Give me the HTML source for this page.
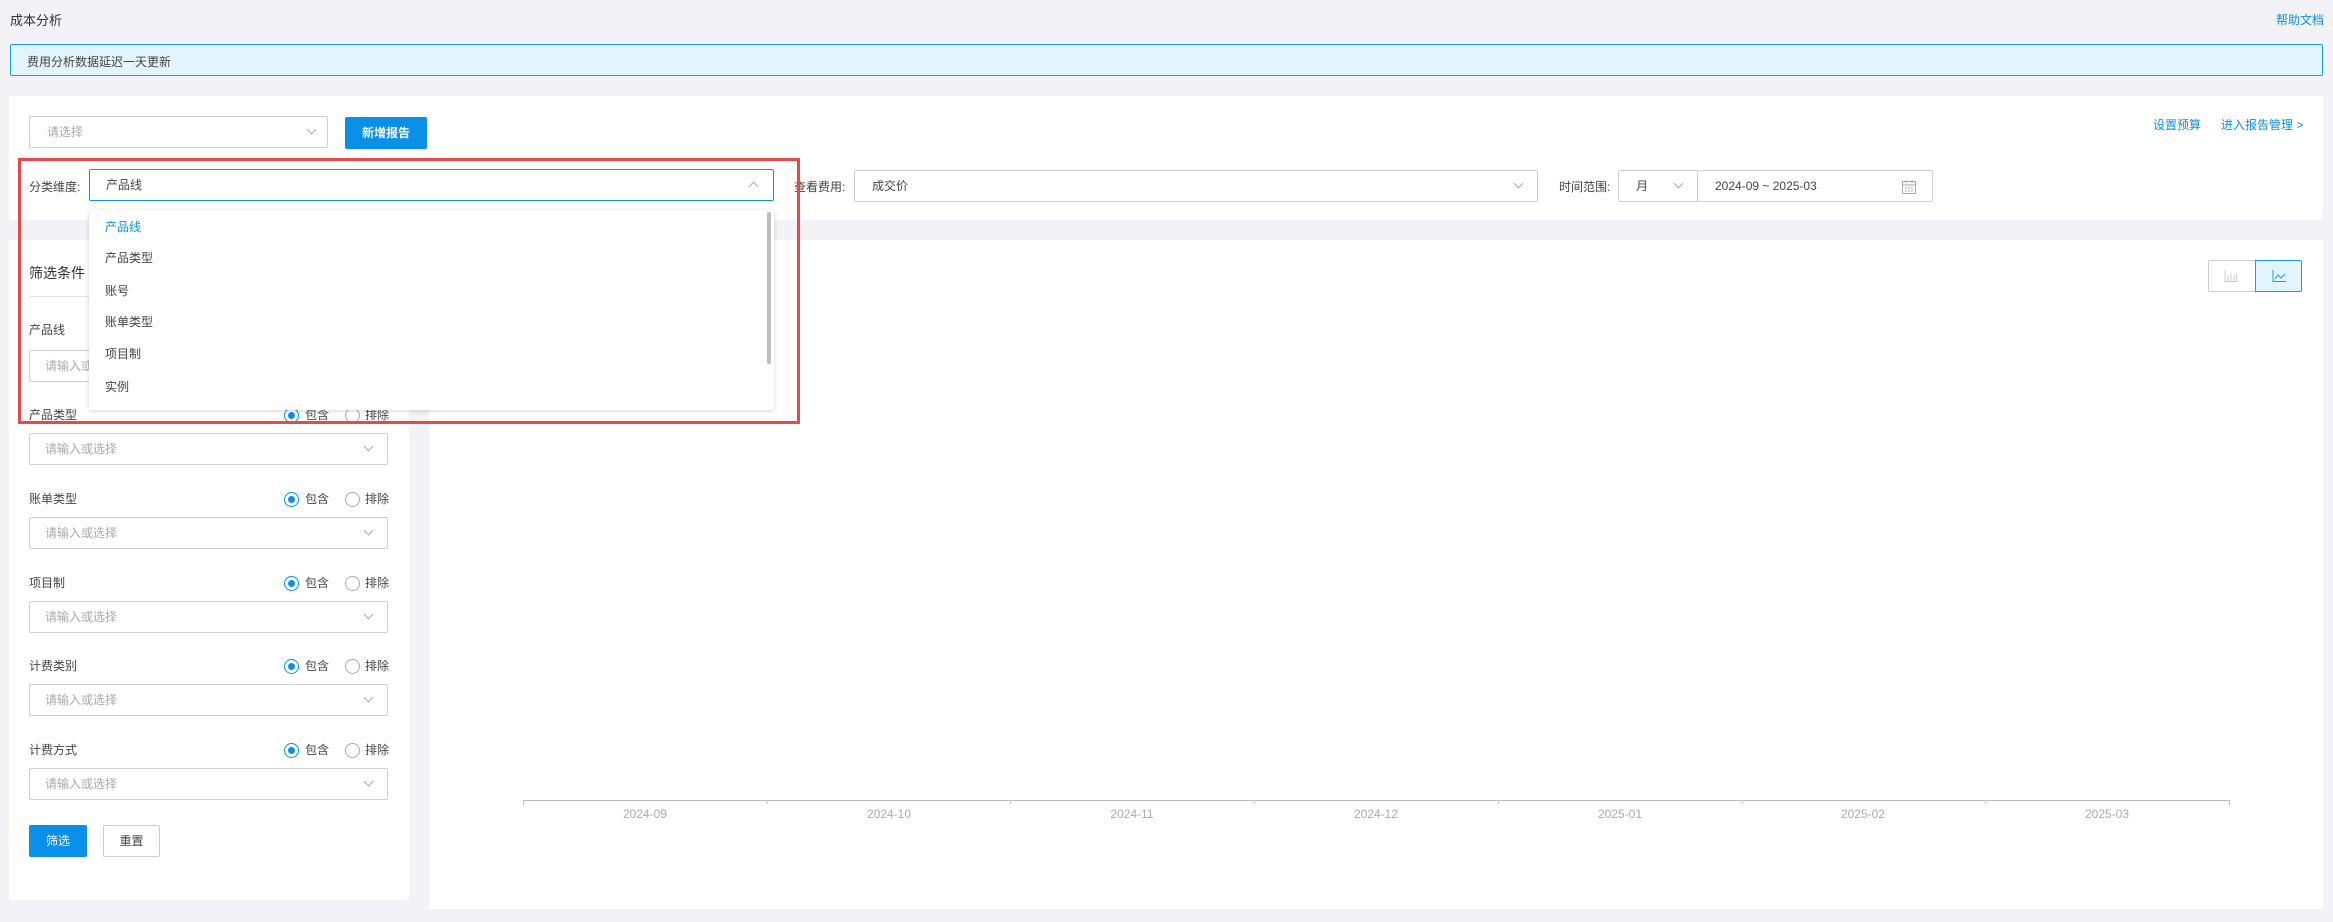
<!DOCTYPE html>
<html><head><meta charset="utf-8"><style>
*{box-sizing:border-box;margin:0;padding:0}
body{width:2333px;height:922px;background:#f3f3f7;font-family:"Liberation Sans","Noto Sans CJK SC",sans-serif;font-size:12px;color:#444;position:relative;overflow:hidden}
.a{position:absolute}
.inp{position:absolute;background:#fff;border:1px solid #d0d0d0;border-radius:2px}
.inp>span.t{position:absolute;top:0;line-height:30px}
.ph{color:#aaa}
.chev{position:absolute;width:7px;height:7px;border-right:1px solid #aaa;border-bottom:1px solid #aaa;transform:rotate(45deg)}
.radio{position:absolute;width:15px;height:15px;border-radius:50%;border:1px solid #aaa;background:#fff}
.radio.on{border-color:#0a8fe6}
.radio.on:after{content:"";position:absolute;left:3px;top:3px;width:7px;height:7px;border-radius:50%;background:#0a8fe6}
.lbl{position:absolute;font-size:12px;color:#444;line-height:14px}
.x{position:absolute;top:807px;color:#aaa;font-size:12px;width:100px;text-align:center}
</style></head><body>
<div class="a" style="left:10px;top:10px;font-size:13px;color:#333">成本分析</div>
<div class="a" style="left:2276px;top:11px;color:#0a8fe6;font-size:12px">帮助文档</div>
<div class="a" style="left:10px;top:44px;width:2313px;height:32px;background:#e2f5fd;border:1px solid #1a9be6;border-radius:2px"></div>
<div class="a" style="left:27px;top:53px">费用分析数据延迟一天更新</div>

<div class="a" style="left:9px;top:96px;width:2314px;height:124px;background:#fff"></div>
<div class="inp" style="left:29px;top:116px;width:299px;height:32px"><span class="t ph" style="left:17px">请选择</span><span class="chev" style="left:278px;top:9px"></span></div>
<div class="a" style="left:345px;top:117px;width:82px;height:32px;background:#0a90e8;border-radius:2px;color:#fff;font-weight:bold;text-align:center;line-height:32px">新增报告</div>
<div class="a" style="left:2153px;top:116px;color:#0a8fe6">设置预算</div>
<div class="a" style="left:2221px;top:116px;color:#0a8fe6">进入报告管理 &gt;</div>

<div class="a" style="left:29px;top:178px">分类维度:</div>
<div class="inp" style="left:89px;top:169px;width:685px;height:32px;border-color:#1a8fe0"><span class="t" style="left:16px">产品线</span><span class="chev" style="left:660px;top:13px;transform:rotate(225deg)"></span></div>
<div class="a" style="left:794px;top:178px">查看费用:</div>
<div class="inp" style="left:854px;top:170px;width:684px;height:32px"><span class="t" style="left:17px">成交价</span><span class="chev" style="left:660px;top:9px"></span></div>
<div class="a" style="left:1559px;top:178px">时间范围:</div>
<div class="inp" style="left:1618px;top:170px;width:80px;height:32px"><span class="t" style="left:17px">月</span><span class="chev" style="left:56px;top:9px"></span></div>
<div class="inp" style="left:1697px;top:170px;width:236px;height:32px"><span class="t" style="left:17px">2024-09 ~ 2025-03</span>
<svg class="a" style="left:203px;top:8px" width="16" height="16" viewBox="0 0 16 16" fill="none" stroke="#aaa"><rect x="1.5" y="2.5" width="13" height="12"/><line x1="1.5" y1="6" x2="14.5" y2="6"/><line x1="5" y1="1" x2="5" y2="4"/><line x1="11" y1="1" x2="11" y2="4"/><path d="M4 9h2M7 9h2M10 9h2M4 12h2M7 12h2M10 12h2"/></svg></div>

<div class="a" style="left:9px;top:240px;width:400px;height:660px;background:#fff"></div>
<div class="a" style="left:429px;top:240px;width:1894px;height:669px;background:#fff"></div>
<div class="a" style="left:29px;top:263px;font-size:14px;color:#333">筛选条件</div>
<div class="a" style="left:29px;top:296px;width:359px;height:1px;background:#e5e5e5"></div>
<div class="lbl" style="left:29px;top:323px">产品线</div>
<div class="inp" style="left:29px;top:350px;width:359px;height:32px"><span class="t ph" style="left:15px">请输入或选择</span><span class="chev" style="left:335px;top:9px"></span></div>

<div class="lbl" style="left:29px;top:408px">产品类型</div>
<div class="radio on" style="left:284px;top:408px"></div><div class="lbl" style="left:305px;top:408px">包含</div>
<div class="radio" style="left:345px;top:408px"></div><div class="lbl" style="left:365px;top:408px">排除</div>
<div class="inp" style="left:29px;top:433px;width:359px;height:32px"><span class="t ph" style="left:15px">请输入或选择</span><span class="chev" style="left:335px;top:9px"></span></div>

<div class="lbl" style="left:29px;top:492px">账单类型</div>
<div class="radio on" style="left:284px;top:492px"></div><div class="lbl" style="left:305px;top:492px">包含</div>
<div class="radio" style="left:345px;top:492px"></div><div class="lbl" style="left:365px;top:492px">排除</div>
<div class="inp" style="left:29px;top:517px;width:359px;height:32px"><span class="t ph" style="left:15px">请输入或选择</span><span class="chev" style="left:335px;top:9px"></span></div>

<div class="lbl" style="left:29px;top:576px">项目制</div>
<div class="radio on" style="left:284px;top:576px"></div><div class="lbl" style="left:305px;top:576px">包含</div>
<div class="radio" style="left:345px;top:576px"></div><div class="lbl" style="left:365px;top:576px">排除</div>
<div class="inp" style="left:29px;top:601px;width:359px;height:32px"><span class="t ph" style="left:15px">请输入或选择</span><span class="chev" style="left:335px;top:9px"></span></div>

<div class="lbl" style="left:29px;top:659px">计费类别</div>
<div class="radio on" style="left:284px;top:659px"></div><div class="lbl" style="left:305px;top:659px">包含</div>
<div class="radio" style="left:345px;top:659px"></div><div class="lbl" style="left:365px;top:659px">排除</div>
<div class="inp" style="left:29px;top:684px;width:359px;height:32px"><span class="t ph" style="left:15px">请输入或选择</span><span class="chev" style="left:335px;top:9px"></span></div>

<div class="lbl" style="left:29px;top:743px">计费方式</div>
<div class="radio on" style="left:284px;top:743px"></div><div class="lbl" style="left:305px;top:743px">包含</div>
<div class="radio" style="left:345px;top:743px"></div><div class="lbl" style="left:365px;top:743px">排除</div>
<div class="inp" style="left:29px;top:768px;width:359px;height:32px"><span class="t ph" style="left:15px">请输入或选择</span><span class="chev" style="left:335px;top:9px"></span></div>

<div class="a" style="left:29px;top:825px;width:58px;height:32px;background:#0a90e8;border-radius:2px;color:#fff;text-align:center;line-height:32px">筛选</div>
<div class="a" style="left:103px;top:825px;width:57px;height:32px;border:1px solid #ccc;border-radius:2px;text-align:center;line-height:30px;background:#fff">重置</div>

<div class="a" style="left:2208px;top:260px;width:48px;height:32px;border:1px solid #ccc;border-right:none;border-radius:2px 0 0 2px;background:#fff"></div>
<svg class="a" style="left:2224px;top:270px" width="14" height="12" viewBox="0 0 14 12" fill="none" stroke="#ccc"><path d="M1 0v11.5h13M4 5v6M7 3v8M10 6v5M12.5 4v7"/></svg>
<div class="a" style="left:2255px;top:260px;width:47px;height:32px;border:1px solid #1a9be6;border-radius:0 2px 2px 0;background:#e2f5fd"></div>
<svg class="a" style="left:2272px;top:270px" width="14" height="12" viewBox="0 0 14 12" fill="none" stroke="#1a9be6"><path d="M1 0v11.5h13M3 9l3-4 3 3 4-4"/></svg>

<div class="a" style="left:523px;top:800px;width:1707px;height:1px;background:#bbb"></div>
<div class="a" style="left:523px;top:800px;width:1px;height:5px;background:#bbb"></div>
<div class="a" style="left:767px;top:800px;width:1px;height:4px;background:#ccc"></div>
<div class="a" style="left:1010px;top:800px;width:1px;height:4px;background:#ccc"></div>
<div class="a" style="left:1254px;top:800px;width:1px;height:4px;background:#ccc"></div>
<div class="a" style="left:1498px;top:800px;width:1px;height:4px;background:#ccc"></div>
<div class="a" style="left:1742px;top:800px;width:1px;height:4px;background:#ccc"></div>
<div class="a" style="left:1985px;top:800px;width:1px;height:4px;background:#ccc"></div>
<div class="a" style="left:2229px;top:800px;width:1px;height:5px;background:#bbb"></div>
<div class="x" style="left:595px">2024-09</div>
<div class="x" style="left:839px">2024-10</div>
<div class="x" style="left:1082px">2024-11</div>
<div class="x" style="left:1326px">2024-12</div>
<div class="x" style="left:1570px">2025-01</div>
<div class="x" style="left:1813px">2025-02</div>
<div class="x" style="left:2057px">2025-03</div>

<div class="a" style="left:89px;top:210px;width:685px;height:200px;background:#fff;box-shadow:0 1px 5px rgba(0,0,0,.18);border-radius:2px"></div>
<div class="a" style="left:767px;top:212px;width:4px;height:152px;background:#bdbdbd;border-radius:2px"></div>
<div class="a" style="left:105px;top:218px;color:#0a8fe6">产品线</div>
<div class="a" style="left:105px;top:249px">产品类型</div>
<div class="a" style="left:105px;top:282px">账号</div>
<div class="a" style="left:105px;top:313px">账单类型</div>
<div class="a" style="left:105px;top:345px">项目制</div>
<div class="a" style="left:105px;top:378px">实例</div>

<div class="a" style="left:18px;top:158px;width:782px;height:266px;border:3px solid #e5484d"></div>
</body></html>
